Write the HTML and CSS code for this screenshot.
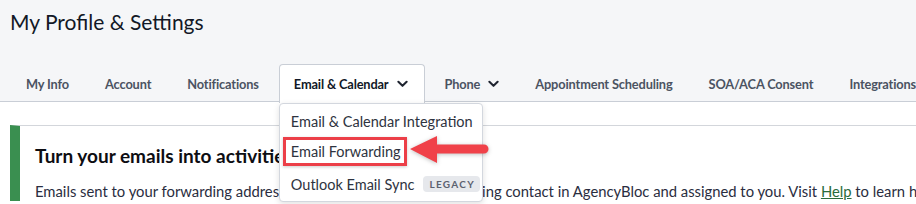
FILE: index.html
```html
<!DOCTYPE html>
<html>
<head>
<meta charset="utf-8">
<link rel="stylesheet" href="styles.css">
</head>
<body>
<div class="top">
  <h1 class="title">My Profile &amp; Settings</h1>
  <nav class="tabs">
    <div class="tab">My Info</div>
    <div class="tab">Account</div>
    <div class="tab">Notifications</div>
    <div class="tab active">Email &amp; Calendar <svg class="chev" viewBox="0 0 12 8" width="11" height="8"><path d="M1.5 1.5 L6 6 L10.5 1.5" fill="none" stroke="currentColor" stroke-width="2.2" stroke-linecap="round" stroke-linejoin="round"/></svg>
      <div class="menu">
        <div class="item first">Email &amp; Calendar Integration</div>
        <div class="item hl">Email Forwarding</div>
        <div class="item last">Outlook Email Sync <span class="badge">LEGACY</span></div>
      </div>
      <svg class="arrow" viewBox="0 0 82 32" width="82" height="32"><path d="M2 15 L29 2 L29 10.5 L76 10.5 A4.5 4.5 0 0 1 76 19.5 L29 19.5 L29 29 Z" fill="#f04149"/></svg>
    </div>
    <div class="tab">Phone <svg class="chev" viewBox="0 0 12 8" width="11" height="8"><path d="M1.5 1.5 L6 6 L10.5 1.5" fill="none" stroke="currentColor" stroke-width="2.2" stroke-linecap="round" stroke-linejoin="round"/></svg></div>
    <div class="tab">Appointment Scheduling</div>
    <div class="tab">SOA/ACA Consent</div>
    <div class="tab">Integrations</div>
  </nav>
</div>
<div class="content">
  <div class="card">
    <h2 class="card-title">Turn your emails into activities</h2>
    <p class="card-text">Emails sent to your forwarding address will be sent to the corresponding contact in AgencyBloc and assigned to you. Visit <a class="link">Help</a> to learn how.</p>
  </div>
</div>
</body>
</html>
```
FILE: styles.css
```css
html, body {
  margin: 0;
  padding: 0;
  width: 916px;
  height: 204px;
  overflow: hidden;
  background: #ffffff;
  font-family: "Lato", "Open Sans", sans-serif;
}
.top {
  background: #f5f6f8;
  padding: 0 0 0 10px;
  border-bottom: 1px solid #c9ced6;
}
.title {
  margin: 0;
  padding-top: 9px;
  height: 64px;
  box-sizing: border-box;
  font-size: 21px;
  font-weight: 400;
  color: #121826;
  line-height: 26px;
}
.tabs {
  display: flex;
  gap: 4px;
  white-space: nowrap;
  height: 38px;
  margin-bottom: -1px;
}
.tab {
  position: relative;
  padding: 0 15px;
  height: 38px;
  display: flex;
  align-items: center;
  gap: 8px;
  font-size: 12.8px;
  letter-spacing: -0.15px;
  font-weight: 700;
  color: #4b5362;
  border: 1px solid transparent;
  border-bottom: none;
  border-radius: 4px 4px 0 0;
  box-sizing: border-box;
}
.tab.active {
  background: #ffffff;
  border-color: #c9ced6;
  color: #111827;
  height: 39px;
  padding: 0 16px 0 14px;
}
.chev { color: #1f2430; }
.menu {
  position: absolute;
  left: -1px;
  top: 38px;
  width: 204px;
  background: #fff;
  border: 1px solid #d3d7de;
  border-radius: 4px;
  box-shadow: 0 2px 6px rgba(0,0,0,0.12);
  padding: 1px 3px 2px;
  box-sizing: border-box;
  z-index: 5;
  font-weight: 400;
  letter-spacing: 0;
}
.item {
  height: 32px;
  display: flex;
  align-items: center;
  padding: 0 5px;
  font-size: 14.5px;
  color: #2e3340;
  border: 3px solid transparent;
  box-sizing: border-box;
}
.item.hl {
  border-color: #ec3f48;
  width: 124px;
  height: 29px;
  margin-bottom: 3px;
  box-shadow: 0 1px 3px rgba(0,0,0,0.2);
}
.item.last {
  height: 30px;
}
.badge {
  margin-left: 9px;
  background: #e6e8ec;
  color: #5b6170;
  font-size: 10px;
  letter-spacing: 1.3px;
  font-weight: 700;
  padding: 2px 5px 2px 6px;
  border-radius: 4px;
}
.arrow {
  position: absolute;
  left: 128px;
  top: 69px;
  z-index: 6;
  filter: drop-shadow(0 1px 2px rgba(0,0,0,0.25));
}
.content {
  padding: 23px 0 0 10px;
}
.card {
  border-left: 10px solid #3a8f50;
  border-top: 1px solid #d3d6db;
  padding: 18px 0 0 15px;
  white-space: nowrap;
}
.card-title {
  margin: 0;
  font-size: 19px;
  font-weight: 700;
  color: #0d0d12;
  line-height: 24px;
}
.card-text {
  margin: 13px 0 0;
  font-size: 14.8px;
  line-height: 20px;
  color: #2a2d40;
}
.link {
  color: #2a6b3b;
  text-decoration: underline;
}
```
